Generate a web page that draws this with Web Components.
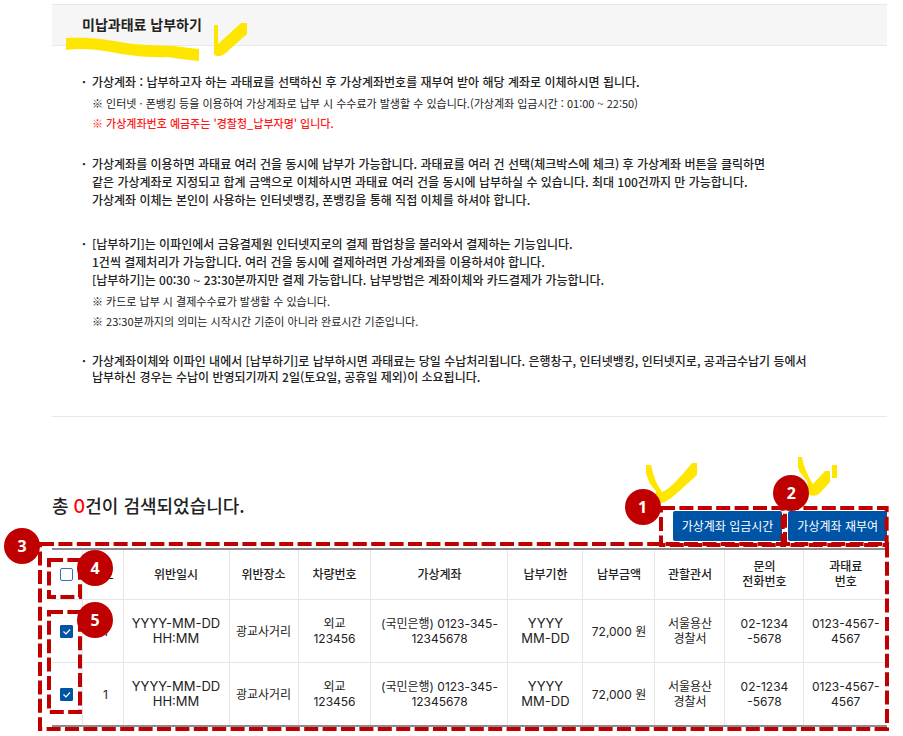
<!DOCTYPE html>
<html lang="ko">
<head>
<meta charset="UTF-8">
<meta name="viewport" content="width=device-width, initial-scale=1">
<title>미납과태료 납부하기</title>
<style>
    body {
        margin: 0;
        background: #fff;
        color: #222;
        font-family: "Noto Sans CJK KR", sans-serif;
        font-size: 12px;
    }
</style>
</head>
<body>
<fine-page></fine-page>

<script>
/**
 * StepBadge Component
 * Numbered red circle. Placed by its parent.
 */
class StepBadge extends HTMLElement {
    constructor() {
        super();
        this.attachShadow({ mode: "open" });
    }

    connectedCallback() {
        this.shadowRoot.innerHTML = `
            <style>
                :host {
                    display: flex;
                    align-items: center;
                    justify-content: center;
                    width: 36px;
                    height: 36px;
                    border-radius: 50%;
                    background: #c00000;
                    color: #fff;
                    font: 700 16px "Noto Sans", sans-serif;
                }
            </style>
            <slot></slot>
        `;
    }
}

/**
 * DashFrame Component
 * Dashed red outline that fills the box it is given.
 */
class DashFrame extends HTMLElement {
    constructor() {
        super();
        this.attachShadow({ mode: "open" });
    }

    connectedCallback() {
        this.shadowRoot.innerHTML = `
            <style>
                :host {
                    display: block;
                    pointer-events: none;
                }

                svg {
                    display: block;
                    width: 100%;
                    height: 100%;
                    overflow: visible;
                }
            </style>
            <svg aria-hidden="true">
                <rect width="100%" height="100%" fill="none" stroke="#c00000" stroke-width="4" stroke-dasharray="14 4.4"/>
            </svg>
        `;
    }
}

/**
 * PenMark Component
 * Yellow highlighter strokes, chosen with the "shape" attribute.
 */
class PenMark extends HTMLElement {
    constructor() {
        super();
        this.attachShadow({ mode: "open" });
    }

    connectedCallback() {
        const shapes = {
            underline: [134, 26, "M0 1C30 0 40 3 60 6C80 9 95 8 108 9Q122 11 133 12V24Q112 22 102 20C80 21 60 18 45 15C28 12 15 11 0 13Z"],
            check: [34, 34, "M0 2H4V21L27 0H33V11L16 26Q9 34 3 33Q0 33 0 30Z"],
            tick: [52, 42, "M0 2H5Q8 18 16 29Q24 27 46 0H51V12L30 31Q18 42 8 41L10 28Q3 22 0 10Z"],
            hook: [40, 40, "M0 0H4Q6 13 15 27L27 14H32V25L21 37Q17 40 11 38L9 24Q0 14 0 10ZM34 8H39V21H34Z"]
        };
        const [w, h, d] = shapes[this.getAttribute("shape")];
        this.shadowRoot.innerHTML = `
            <style>
                :host {
                    display: block;
                    pointer-events: none;
                }

                svg { display: block; }
            </style>
            <svg width="${w}" height="${h}" viewBox="0 0 ${w} ${h}" aria-hidden="true">
                <path d="${d}" fill="#ffe600"/>
            </svg>
        `;
    }
}

/**
 * PageTitle Component
 */
class PageTitle extends HTMLElement {
    constructor() {
        super();
        this.attachShadow({ mode: "open" });
    }

    connectedCallback() {
        this.shadowRoot.innerHTML = `
            <style>
                :host {
                    display: block;
                    position: relative;
                    padding: 7px 30px 9px;
                    background: #f6f6f6;
                    border-top: 1px solid #e8e8e8;
                    border-bottom: 1px solid #e8e8e8;
                }

                h1 {
                    margin: 0;
                    font-size: 14px;
                    font-weight: 700;
                    line-height: 24px;
                }

                pen-mark { position: absolute; }
                .line { left: 14px; top: 32px; }
                .check { left: 162px; top: 18px; }
            </style>
            <h1><slot></slot></h1>
            <pen-mark class="line" shape="underline"></pen-mark>
            <pen-mark class="check" shape="check"></pen-mark>
        `;
    }
}

/**
 * NoticeItem Component
 * One bullet of the guide, with small notes in the "note" slot.
 */
class NoticeItem extends HTMLElement {
    constructor() {
        super();
        this.attachShadow({ mode: "open" });
    }

    connectedCallback() {
        this.shadowRoot.innerHTML = `
            <style>
                :host {
                    display: grid;
                    grid-template-columns: 10px 1fr;
                    line-height: 18px;
                    font-weight: 500;
                }

                :host([compact]) { line-height: 16px; }

                .dot::before { content: "·"; font-weight: 700; }

                .notes {
                    grid-column: 2;
                    display: flex;
                    flex-direction: column;
                    margin: 2px 0 -4px;
                }

                ::slotted([slot="note"]) {
                    font-size: 11px;
                    font-weight: 400;
                    line-height: 20px;
                }

                ::slotted(.warn) { color: #ff1a1a; font-weight: 500; }
            </style>
            <span class="dot"></span>
            <div><slot></slot></div>
            ${this.querySelector('[slot="note"]') ? '<div class="notes"><slot name="note"></slot></div>' : ""}
        `;
    }
}

/**
 * ActionButton Component
 */
class ActionButton extends HTMLElement {
    constructor() {
        super();
        this.attachShadow({ mode: "open" });
    }

    connectedCallback() {
        this.shadowRoot.innerHTML = `
            <style>
                :host { display: block; }

                button {
                    display: block;
                    padding: 0 9px;
                    border: 0;
                    border-radius: 2px;
                    background: #0054a6;
                    color: #fff;
                    font: inherit;
                    line-height: 30px;
                    cursor: pointer;
                }
            </style>
            <button type="button"><slot></slot></button>
        `;
    }
}

/**
 * FineTable Component
 * Search results with row selection.
 */
class FineTable extends HTMLElement {
    constructor() {
        super();
        this.attachShadow({ mode: "open" });
        this.heads = ["번호", "위반일시", "위반장소", "차량번호", "가상계좌", "납부기한", "납부금액", "관할관서", "문의<br>전화번호", "과태료<br>번호"];
        this.rows = [1, 1].map(no => [
            no, "YYYY-MM-DD<br>HH:MM", "광교사거리", "외교<br>123456",
            "(국민은행) 0123-345-<br>12345678", "YYYY<br>MM-DD", "72,000 원",
            "서울용산<br>경찰서", "02-1234<br>-5678", "0123-4567-<br>4567"
        ]);
        this.widths = [30, 41, 106, 69, 73, 137, 75, 72, 70, 79, 83];
    }

    connectedCallback() {
        const total = this.widths.reduce((a, b) => a + b);
        const cols = this.widths.map(w => `<col style="width:${w / total * 100}%">`).join("");
        const box = (label, on) => `<input type="checkbox" aria-label="${label}"${on ? " checked" : ""}>`;
        const cell = c => `<td${/YYYY/.test(c) ? ' class="date"' : ""}>${c}</td>`;

        this.shadowRoot.innerHTML = `
            <style>
                :host { display: block; }

                table {
                    width: 100%;
                    table-layout: fixed;
                    border-collapse: collapse;
                    border-top: 2px solid #8c8c8c;
                    border-bottom: 2px solid #8c8c8c;
                    text-align: center;
                    font-family: Inter, "Noto Sans CJK KR", sans-serif;
                    line-height: 15px;
                }

                th, td {
                    padding: 16px 0;
                    border: 1px solid #e6e6e6;
                    border-width: 1px 0 0 1px;
                    white-space: nowrap;
                    font-weight: 400;
                }

                th { padding: 9px 0 10px; font-weight: 500; }
                tr > :first-child { border-left: 0; }
                td:nth-child(2) { padding-left: 6px; }
                .date { font-size: 13px; }

                input {
                    appearance: none;
                    display: block;
                    width: 13px;
                    height: 13px;
                    margin: 0 auto;
                    border: 1px solid #2f72b8;
                    border-radius: 2px;
                    background: #fff;
                }

                input:checked {
                    border-color: #0054a6;
                    border-radius: 1px;
                    background: #0054a6 url('data:image/svg+xml,<svg xmlns="http://www.w3.org/2000/svg" viewBox="0 0 11 11"><path d="M2.5 5.5L5 8L9 3.5" fill="none" stroke="white" stroke-width="1.2"/></svg>');
                }
            </style>
            <table>
                <colgroup>${cols}</colgroup>
                <thead>
                    <tr><th>${box("전체 선택")}</th>${this.heads.map(h => `<th scope="col">${h}</th>`).join("")}</tr>
                </thead>
                <tbody>
                    ${this.rows.map((r, i) => `<tr><td>${box(`${i + 1}행 선택`, true)}</td>${r.map(cell).join("")}</tr>`).join("")}
                </tbody>
            </table>
        `;
    }
}

/**
 * FinePage Component
 */
class FinePage extends HTMLElement {
    constructor() {
        super();
        this.attachShadow({ mode: "open" });
    }

    connectedCallback() {
        this.shadowRoot.innerHTML = `
            <style>
                :host {
                    display: block;
                    padding: 4px 16px 8px 52px;
                }

                .guide {
                    display: flex;
                    flex-direction: column;
                    gap: 26px;
                    padding: 27px 30px 31px;
                    border-bottom: 1px solid #e8e8e8;
                }

                .bar {
                    display: flex;
                    justify-content: space-between;
                    align-items: flex-end;
                    margin-top: 70px;
                    padding-bottom: 7px;
                }

                h2 {
                    margin: 0;
                    padding-bottom: 18px;
                    font-size: 18px;
                    font-weight: 500;
                    line-height: 36px;
                }

                h2 em {
                    color: #f00;
                    font-family: Inter, sans-serif;
                    font-style: normal;
                    line-height: 1;
                }

                .actions { display: flex; gap: 6px; }
                .action, .result { position: relative; }

                dash-frame, step-badge, pen-mark { position: absolute; }

                .action dash-frame { inset: -3px 0 -4px -12px; }
                .action + .action dash-frame { left: -3px; }
                .action step-badge { left: -48px; top: -22px; }
                .action + .action step-badge { left: -15px; top: -36px; }
                .action pen-mark { left: -27px; top: -48px; }
                .action + .action pen-mark { left: 10px; top: -54px; }

                .f3 { inset: -4px 0 -2px -12px; }
                .f4, .f5 { left: -3px; width: 31px; }
                .f4 { top: 12px; height: 37px; }
                .f5 { top: 64px; height: 100px; }
                .b3 { left: -48px; top: -20px; }
                .b4, .b5 { left: 25px; }
                .b4 { top: 2px; }
                .b5 { top: 54px; }
            </style>

            <page-title>미납과태료 납부하기</page-title>

            <section class="guide">
                <notice-item>
                    가상계좌 : 납부하고자 하는 과태료를 선택하신 후 가상계좌번호를 재부여 받아 해당 계좌로 이체하시면 됩니다.
                    <span slot="note">※ 인터넷 · 폰뱅킹 등을 이용하여 가상계좌로 납부 시 수수료가 발생할 수 있습니다.(가상계좌 입금시간 : 01:00 ~ 22:50)</span>
                    <span slot="note" class="warn">※ 가상계좌번호 예금주는 '경찰청_납부자명' 입니다.</span>
                </notice-item>
                <notice-item>
                    가상계좌를 이용하면 과태료 여러 건을 동시에 납부가 가능합니다. 과태료를 여러 건 선택(체크박스에 체크) 후 가상계좌 버튼을 클릭하면<br>
                    같은 가상계좌로 지정되고 합계 금액으로 이체하시면 과태료 여러 건을 동시에 납부하실 수 있습니다. 최대 100건까지 만 가능합니다.<br>
                    가상계좌 이체는 본인이 사용하는 인터넷뱅킹, 폰뱅킹을 통해 직접 이체를 하셔야 합니다.
                </notice-item>
                <notice-item>
                    [납부하기]는 이파인에서 금융결제원 인터넷지로의 결제 팝업창을 불러와서 결제하는 기능입니다.<br>
                    1건씩 결제처리가 가능합니다. 여러 건을 동시에 결제하려면 가상계좌를 이용하셔야 합니다.<br>
                    [납부하기]는 00:30 ~ 23:30분까지만 결제 가능합니다. 납부방법은 계좌이체와 카드결제가 가능합니다.
                    <span slot="note">※ 카드로 납부 시 결제수수료가 발생할 수 있습니다.</span>
                    <span slot="note">※ 23:30분까지의 의미는 시작시간 기준이 아니라 완료시간 기준입니다.</span>
                </notice-item>
                <notice-item compact>
                    가상계좌이체와 이파인 내에서 [납부하기]로 납부하시면 과태료는 당일 수납처리됩니다. 은행창구, 인터넷뱅킹, 인터넷지로, 공과금수납기 등에서<br>
                    납부하신 경우는 수납이 반영되기까지 2일(토요일, 공휴일 제외)이 소요됩니다.
                </notice-item>
            </section>

            <div class="bar">
                <h2>총 <em>0</em>건이 검색되었습니다.</h2>
                <div class="actions">
                    <div class="action">
                        <action-button>가상계좌 입금시간</action-button>
                        <dash-frame></dash-frame>
                        <pen-mark shape="tick"></pen-mark>
                        <step-badge>1</step-badge>
                    </div>
                    <div class="action">
                        <action-button>가상계좌 재부여</action-button>
                        <dash-frame></dash-frame>
                        <pen-mark shape="hook"></pen-mark>
                        <step-badge>2</step-badge>
                    </div>
                </div>
            </div>

            <div class="result">
                <fine-table></fine-table>
                <dash-frame class="f3"></dash-frame>
                <dash-frame class="f4"></dash-frame>
                <dash-frame class="f5"></dash-frame>
                <step-badge class="b3">3</step-badge>
                <step-badge class="b4">4</step-badge>
                <step-badge class="b5">5</step-badge>
            </div>
        `;
    }
}

customElements.define("step-badge", StepBadge);
customElements.define("dash-frame", DashFrame);
customElements.define("pen-mark", PenMark);
customElements.define("page-title", PageTitle);
customElements.define("notice-item", NoticeItem);
customElements.define("action-button", ActionButton);
customElements.define("fine-table", FineTable);
customElements.define("fine-page", FinePage);
</script>
</body>
</html>
